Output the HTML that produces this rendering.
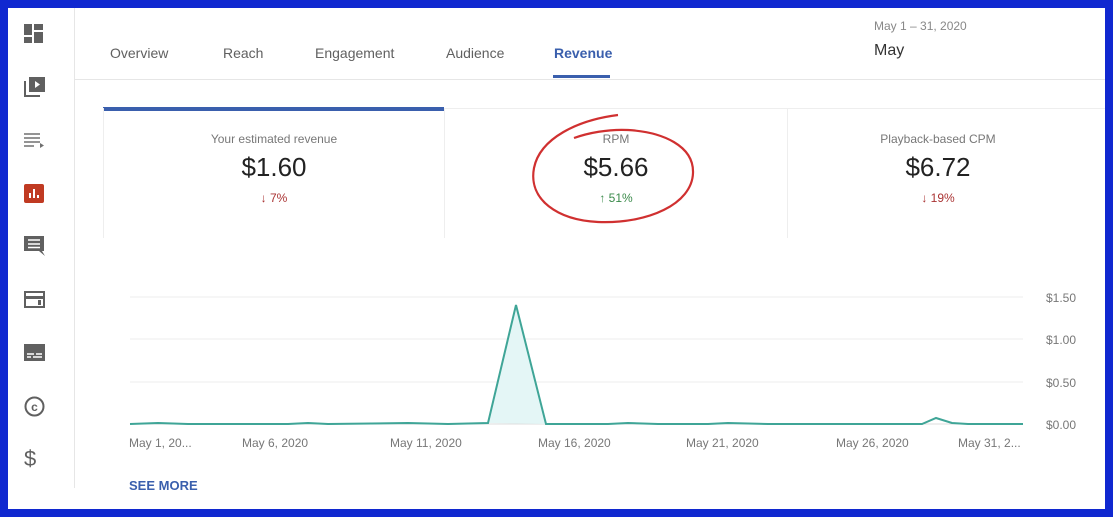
<!DOCTYPE html>
<html><head><style>
body{margin:0;width:1113px;height:517px;background:#1028d0;overflow:hidden;font-family:"Liberation Sans",sans-serif;}
.w{position:absolute;left:8px;top:8px;width:1097px;height:501px;background:#fff;overflow:hidden}
.sb{position:absolute;left:66px;top:0;width:1px;height:480px;background:#e6e6e6}
.ic{position:absolute;left:16px}
.t{position:absolute;font-size:14px;color:#606060;top:37px}
.c{position:absolute;text-align:center;}
.lab{font-size:12px;color:#777;}
.val{font-size:26px;color:#222;margin-top:6px}
.ch{font-size:12px;margin-top:8px}
.ax{position:absolute;font-size:12px;color:#777}
</style></head><body>
<div class="w">
<div class="sb"></div>
<svg class="ic" style="top:16px" width="20" height="20"><rect x="0" y="0" width="8" height="11" fill="#606060"/><rect x="10" y="0" width="9" height="6" fill="#606060"/><rect x="0" y="13" width="8" height="6" fill="#606060"/><rect x="10" y="8" width="9" height="11" fill="#606060"/></svg>
<svg class="ic" style="top:68px" width="22" height="22"><path d="M1 5v15h15" stroke="#606060" stroke-width="2" fill="none"/><rect x="5" y="1" width="16" height="15" fill="#606060"/><path d="M11 5l5 3.5-5 3.5z" fill="#fff"/></svg>
<svg class="ic" style="top:124px" width="22" height="16"><path d="M0 2h16M0 6h16M0 10h16M0 14h10" stroke="#707070" stroke-width="1.6"/><path d="M16 11l4 2.5-4 2.5z" fill="#707070"/></svg>
<svg class="ic" style="top:176px" width="22" height="20"><rect width="20" height="19" rx="2" fill="#c03a22"/><path d="M6 14v-5M10 14V5M14 14v-3" stroke="#fff" stroke-width="2"/></svg>
<svg class="ic" style="top:228px" width="22" height="22"><path d="M0 0h20v15h-2l3 5-6-5H0z" fill="#606060"/><path d="M4 4h12M4 8h12M4 11.5h12" stroke="#fff" stroke-width="1.5"/></svg>
<svg class="ic" style="top:283px" width="22" height="18"><rect x="1" y="1" width="19" height="15" fill="none" stroke="#606060" stroke-width="2"/><rect x="1" y="5" width="19" height="3" fill="#606060"/><rect x="14" y="9" width="3" height="5" fill="#606060"/></svg>
<svg class="ic" style="top:336px" width="22" height="18"><rect x="0" y="0" width="21" height="17" fill="#606060"/><path d="M3 10h7M12 10h6M3 13h4M9 13h9" stroke="#fff" stroke-width="1.4"/></svg>
<svg class="ic" style="top:388px" width="22" height="22"><circle cx="10.5" cy="10.5" r="9" fill="none" stroke="#606060" stroke-width="2"/><text x="10.5" y="15" text-anchor="middle" font-size="12" font-family="Liberation Sans" fill="#606060" font-weight="bold">c</text></svg>
<div style="position:absolute;left:16px;top:438px;font-size:22px;color:#606060">$</div>

<div class="t" style="left:102px">Overview</div>
<div class="t" style="left:215px">Reach</div>
<div class="t" style="left:307px">Engagement</div>
<div class="t" style="left:438px">Audience</div>
<div class="t" style="left:546px;color:#3a5fad;font-weight:bold">Revenue</div>
<div style="position:absolute;left:545px;top:67px;width:57px;height:3px;background:#3a5fad"></div>
<div style="position:absolute;left:866px;top:11px;font-size:12px;color:#888">May 1 – 31, 2020</div>
<div style="position:absolute;left:866px;top:34px;font-size:16px;color:#333">May</div>
<div style="position:absolute;left:66px;top:71px;width:1031px;height:1px;background:#e6e6e6"></div>

<div style="position:absolute;left:95px;top:100px;width:1002px;height:1px;background:#eee"></div>
<div style="position:absolute;left:95px;top:99px;width:341px;height:4px;background:#3a5fad"></div>
<div style="position:absolute;left:95px;top:100px;width:1px;height:130px;background:#eee"></div>
<div style="position:absolute;left:436px;top:100px;width:1px;height:130px;background:#eee"></div>
<div style="position:absolute;left:779px;top:100px;width:1px;height:130px;background:#eee"></div>

<div class="c" style="left:96px;width:340px;top:124px"><div class="lab">Your estimated revenue</div><div class="val">$1.60</div><div class="ch" style="color:#a33">↓ 7%</div></div>
<div class="c" style="left:437px;width:342px;top:124px"><div class="lab">RPM</div><div class="val">$5.66</div><div class="ch" style="color:#3a8a4a">↑ 51%</div></div>
<div class="c" style="left:780px;width:300px;top:124px"><div class="lab">Playback-based CPM</div><div class="val">$6.72</div><div class="ch" style="color:#a33">↓ 19%</div></div>

<svg style="position:absolute;left:0;top:0" width="1097" height="501">
<path d="M610 107C570 112 532 130 526 160C520 192 550 212 590 214C640 216 684 196 685 165C686 138 655 124 620 122C600 121 580 125 566 130" fill="none" stroke="#d03030" stroke-width="2.2"/>
<g stroke="#eee" stroke-width="1"><path d="M122 289H1015M122 331H1015M122 374H1015"/><path d="M122 416H1015" stroke="#ddd"/></g>
<path d="M480 415L508 297L538 416Z" fill="#e4f6f6"/>
<path d="M122 416L150 415L180 416L280 416L300 415L320 416L400 415L440 416L480 415L508 297L538 416L600 416L620 415L650 416L700 416L720 415L760 416L900 416L914 416L928 410L944 415L960 416L1015 416" fill="none" stroke="#3fa597" stroke-width="2"/>
</svg>
<div class="ax" style="left:1038px;top:283px">$1.50</div>
<div class="ax" style="left:1038px;top:325px">$1.00</div>
<div class="ax" style="left:1038px;top:368px">$0.50</div>
<div class="ax" style="left:1038px;top:410px">$0.00</div>
<div class="ax" style="left:121px;top:428px">May 1, 20...</div>
<div class="ax" style="left:234px;top:428px">May 6, 2020</div>
<div class="ax" style="left:382px;top:428px">May 11, 2020</div>
<div class="ax" style="left:530px;top:428px">May 16, 2020</div>
<div class="ax" style="left:678px;top:428px">May 21, 2020</div>
<div class="ax" style="left:828px;top:428px">May 26, 2020</div>
<div class="ax" style="left:950px;top:428px">May 31, 2...</div>
<div style="position:absolute;left:121px;top:470px;font-size:13px;color:#3a5fad;font-weight:bold">SEE MORE</div>
</div>
</body></html>
